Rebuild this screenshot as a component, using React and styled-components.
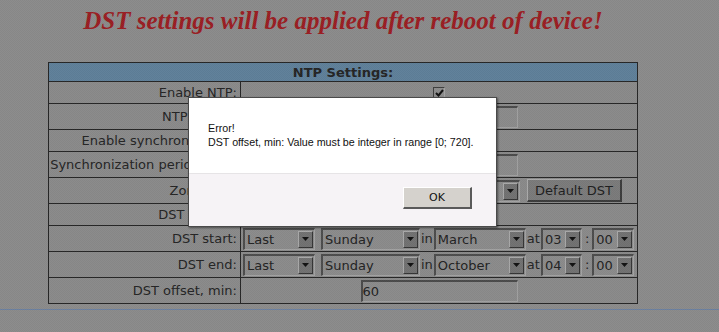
import React from "react";
import styled, { createGlobalStyle } from "styled-components";

const GlobalStyle = createGlobalStyle`
  html, body {
    margin: 0;
    padding: 0;
    background: #8b8b8b;
  }
  body {
    font-family: "DejaVu Sans", Verdana, sans-serif;
    overflow: hidden;
  }
`;

const Page = styled.div`
  width: 719px;
  height: 332px;
  padding-top: 6px;
  box-sizing: border-box;
`;

const Content = styled.div`
  width: 686px;
`;

const Title = styled.h2`
  margin: 0;
  font: italic bold 25px/30px "Liberation Serif", "Times New Roman", serif;
  color: #9a1d22;
  text-align: center;
`;

const Table = styled.table`
  margin: 26px auto 0;
  width: 590px;
  border-collapse: collapse;
  border: 1px solid #252525;
`;

const HeaderCell = styled.th`
  padding: 0;
  background: #5f7f99;
  border: 1px solid #252525;
  color: #1d2730;
  font-size: 13px;
  font-weight: bold;
`;

const LabelCell = styled.td`
  width: 191px;
  padding: 0;
  background: #8a8a8a;
  border: 1px solid #252525;
`;

const ValueCell = styled.td`
  padding: 0;
  background: #8a8a8a;
  border: 1px solid #252525;
`;

const Inner = styled.div`
  height: ${(p) => p.$h}px;
  display: flex;
  align-items: center;
  justify-content: ${(p) => p.$justify || "center"};
  padding: ${(p) => p.$pad || "0"};
  box-sizing: border-box;
  font-size: 13px;
  color: #242424;
  white-space: nowrap;
`;

const Check = styled.span`
  width: 12px;
  height: 12px;
  box-sizing: border-box;
  border-top: 1px solid #3e3e3e;
  border-left: 1px solid #3e3e3e;
  border-bottom: 1px solid #a3a3a3;
  border-right: 1px solid #a3a3a3;
  background: #8c8c8c;
  display: flex;
  align-items: center;
  justify-content: center;
`;

const TextInput = styled.div`
  width: 157px;
  height: 22px;
  box-sizing: border-box;
  border-top: 2px solid #4a4a4a;
  border-left: 2px solid #4a4a4a;
  border-bottom: 1px solid #a0a0a0;
  border-right: 1px solid #a0a0a0;
  background: #8b8b8b;
  font-size: 13px;
  line-height: 19px;
  color: #222;
`;

const SelectBox = styled.div`
  width: ${(p) => p.$w}px;
  height: 22px;
  margin-left: ${(p) => p.$ml || 0}px;
  box-sizing: border-box;
  border-top: 2px solid #4c4c4c;
  border-left: 2px solid #4c4c4c;
  border-bottom: 1px solid #a2a2a2;
  border-right: 1px solid #a2a2a2;
  background: #8b8b8b;
  display: flex;
  align-items: center;
  justify-content: space-between;
  padding: 0 1px 0 2px;
  flex: none;
  font-size: 13px;
  color: #222;
  overflow: hidden;
`;

const ArrowButton = styled.span`
  width: 15px;
  height: 17px;
  box-sizing: border-box;
  background: #717171;
  border-top: 1px solid #a8a8a8;
  border-left: 1px solid #a8a8a8;
  border-bottom: 1px solid #353535;
  border-right: 1px solid #353535;
  display: flex;
  align-items: center;
  justify-content: center;
  flex: none;
`;

const Word = styled.span`
  padding: 0 ${(p) => p.$pad || 1}px;
  font-size: 13px;
  color: #242424;
`;

const Button = styled.div`
  width: 95px;
  height: 23px;
  box-sizing: border-box;
  background: #7a7a7a;
  border-top: 1px solid #ababab;
  border-left: 1px solid #ababab;
  border-bottom: 2px solid #3c3c3c;
  border-right: 2px solid #3c3c3c;
  display: flex;
  align-items: center;
  justify-content: center;
  font-size: 13px;
  color: #1e1e1e;
  margin-left: 7px;
`;

const Divider = styled.div`
  margin-top: 5px;
  border-top: 1px solid #6a7fa0;
  width: 719px;
`;

const Overlay = styled.div`
  position: fixed;
  inset: 0;
  pointer-events: none;
  background-image: repeating-conic-gradient(
    rgba(255, 255, 255, 0.025) 0 25%,
    rgba(0, 0, 0, 0.025) 0 50%
  );
  background-size: 2px 2px;
`;

const Dialog = styled.div`
  position: fixed;
  left: 188px;
  top: 97px;
  width: 309px;
  height: 130px;
  box-sizing: border-box;
  border: 1px solid #4a4a4a;
  box-shadow: 1px 1px 2px rgba(0, 0, 0, 0.45);
  display: flex;
  flex-direction: column;
  font-family: "Liberation Sans", Arial, sans-serif;
`;

const DialogBody = styled.div`
  height: 76px;
  background: #ffffff;
  border-bottom: 1px solid #e6e4e6;
  padding: 23px 0 0 19px;
  box-sizing: border-box;
  font-size: 10.7px;
  line-height: 14px;
  color: #111;
`;

const DialogFooter = styled.div`
  flex: 1;
  background: #f6f3f6;
  display: flex;
  justify-content: flex-end;
  align-items: flex-start;
  padding: 13px 24px 0 0;
`;

const OkButton = styled.div`
  width: 69px;
  height: 22px;
  box-sizing: border-box;
  background: #d5d2cd;
  border-top: 1px solid #ffffff;
  border-left: 1px solid #ffffff;
  border-bottom: 2px solid #5a5a5a;
  border-right: 2px solid #5a5a5a;
  display: flex;
  align-items: center;
  justify-content: center;
  font-family: "DejaVu Sans", sans-serif;
  font-size: 11px;
  color: #111;
`;

const Arrow = () => (
  <svg width="7" height="4" viewBox="0 0 7 4">
    <polygon points="0,0 7,0 3.5,4" fill="#111" />
  </svg>
);

const Tick = () => (
  <svg width="9" height="8" viewBox="0 0 9 8">
    <polyline points="1,4 3.5,6.5 8,1" fill="none" stroke="#111" strokeWidth="2" />
  </svg>
);

const Select = ({ w, ml, value }) => (
  <SelectBox $w={w} $ml={ml}>
    <span>{value}</span>
    <ArrowButton>
      <Arrow />
    </ArrowButton>
  </SelectBox>
);

const Row = ({ label, h, children, justify }) => (
  <tr>
    <LabelCell>
      <Inner $h={h} $justify="flex-end" $pad="0 3px 0 0">
        {label}
      </Inner>
    </LabelCell>
    <ValueCell>
      <Inner $h={h} $justify={justify} $pad={justify ? "0 0 0 2px" : "0"}>
        {children}
      </Inner>
    </ValueCell>
  </tr>
);

const DateRow = ({ label, week, day, month, hour, minute }) => (
  <Row label={label} h={25} justify="flex-start">
    <Select w={72} value={week} />
    <Select w={99} ml={6} value={day} />
    <Word $pad={1}>in</Word>
    <Select w={92} value={month} />
    <Word $pad={1}>at</Word>
    <Select w={41} value={hour} />
    <Word $pad={3}>:</Word>
    <Select w={42} value={minute} />
  </Row>
);

export default function App() {
  return (
    <>
      <GlobalStyle />
      <Page>
        <Content>
          <Title>DST settings will be applied after reboot of device!</Title>
          <Table>
            <thead>
              <tr>
                <HeaderCell colSpan={2}>
                  <Inner $h={18}>
                    <b>NTP Settings:</b>
                  </Inner>
                </HeaderCell>
              </tr>
            </thead>
            <tbody>
              <Row label="Enable NTP:" h={21}>
                <Check>
                  <Tick />
                </Check>
              </Row>
              <Row label="NTP server:" h={25}>
                <TextInput>pool.ntp.org</TextInput>
              </Row>
              <Row label="Enable synchronization:" h={21}>
                <Check>
                  <Tick />
                </Check>
              </Row>
              <Row label="Synchronization period, min:" h={25}>
                <TextInput>60</TextInput>
              </Row>
              <Row label="Zone UTC:" h={25}>
                <Select w={264} value="(UTC+02:00) Kyiv" />
                <Button>Default DST</Button>
              </Row>
              <Row label="DST enable:" h={21}>
                <Check>
                  <Tick />
                </Check>
              </Row>
              <DateRow
                label="DST start:"
                week="Last"
                day="Sunday"
                month="March"
                hour="03"
                minute="00"
              />
              <DateRow
                label="DST end:"
                week="Last"
                day="Sunday"
                month="October"
                hour="04"
                minute="00"
              />
              <Row label="DST offset, min:" h={25}>
                <TextInput>60</TextInput>
              </Row>
            </tbody>
          </Table>
        </Content>
        <Divider />
      </Page>
      <Overlay />
      <Dialog>
        <DialogBody>
          Error!
          <br />
          DST offset, min: Value must be integer in range [0; 720].
        </DialogBody>
        <DialogFooter>
          <OkButton>OK</OkButton>
        </DialogFooter>
      </Dialog>
    </>
  );
}
